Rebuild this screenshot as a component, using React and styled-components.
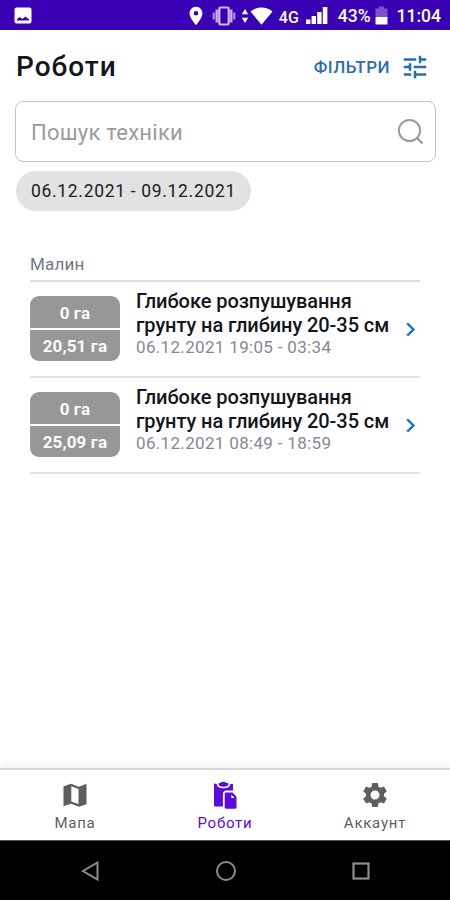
import React from 'react';
import styled, { createGlobalStyle } from 'styled-components';
import { MdLocationOn, MdTune, MdSettings } from 'react-icons/md';

const GlobalStyle = createGlobalStyle`
  * {
    box-sizing: border-box;
  }
  body {
    margin: 0;
    background: #fff;
    font-family: Roboto, 'Noto Sans', sans-serif;
  }
  button {
    border: 0;
    padding: 0;
    background: none;
    font-family: inherit;
  }
  svg {
    display: block;
    flex-shrink: 0;
  }
`;

const Screen = styled.div`
  width: 450px;
  height: 900px;
  display: flex;
  flex-direction: column;
  overflow: hidden;
  background: #fff;
`;

const StatusBar = styled.div`
  height: 30px;
  flex-shrink: 0;
  display: flex;
  align-items: center;
  justify-content: space-between;
  padding: 2px 9px 0 14px;
  color: #fff;
  background: #3a00b4;
  border-bottom: 1px solid #2c0a9c;
`;

const StatusIcons = styled.div`
  display: flex;
  align-items: center;
`;

const StatusText = styled.span`
  font-size: ${({ $size }) => $size || 18}px;
  font-weight: 500;
  line-height: 20px;
  letter-spacing: ${({ $spacing }) => $spacing || 0}px;
  margin-left: ${({ $gap }) => $gap || 0}px;
  padding-top: ${({ $drop }) => $drop || 0}px;
  white-space: nowrap;
`;

const Slot = styled.span`
  display: flex;
  margin-left: ${({ $gap }) => $gap || 0}px;
`;

const Header = styled.header`
  height: 71px;
  flex-shrink: 0;
  display: flex;
  align-items: center;
  justify-content: space-between;
  padding: 2px 20px 0 16px;
`;

const Title = styled.h1`
  margin: 0;
  font-size: 28px;
  font-weight: 500;
  line-height: 36px;
  letter-spacing: 1px;
  color: #14151c;
`;

const FilterButton = styled.button`
  display: flex;
  align-items: center;
  gap: 10px;
  font-size: 17px;
  font-weight: 500;
  line-height: 24px;
  letter-spacing: 0.5px;
  color: #2b6cb0;
`;

const SearchBox = styled.div`
  height: 61px;
  flex-shrink: 0;
  display: flex;
  align-items: center;
  justify-content: space-between;
  margin: 0 14px 0 15px;
  padding: 0 10px 0 15px;
  border: 1px solid #c4c4c4;
  border-radius: 8px;
`;

const Placeholder = styled.span`
  padding-top: 2px;
  font-size: 22px;
  line-height: 28px;
  letter-spacing: 0.25px;
  color: #9b9b9b;
`;

const Chip = styled.div`
  width: 235px;
  height: 40px;
  flex-shrink: 0;
  margin: 9px 0 0 16px;
  padding-left: 15px;
  border-radius: 20px;
  background: #e2e2e2;
  font-size: 17.5px;
  line-height: 40px;
  letter-spacing: 0.68px;
  white-space: nowrap;
  color: #202020;
`;

const Group = styled.section`
  flex: 1;
  padding: 41px 30px 0;
`;

const GroupName = styled.div`
  height: 30px;
  border-bottom: 2px solid #dedede;
  font-size: 17px;
  line-height: 24px;
  letter-spacing: 0.2px;
  color: #737784;
`;

const Row = styled.div`
  height: 96px;
  display: flex;
  padding-top: 14px;
  border-bottom: 2px solid #e3e3e3;
`;

const Area = styled.div`
  width: 90px;
  height: 65px;
  flex-shrink: 0;
  display: flex;
  flex-direction: column;
  gap: 2px;
  border-radius: 9px;
  overflow: hidden;
`;

const AreaValue = styled.div`
  flex: 1;
  display: flex;
  align-items: center;
  justify-content: center;
  padding-top: 2px;
  font-size: 17px;
  font-weight: 700;
  letter-spacing: 0.1px;
  color: #fafafa;
  background: #979797;
`;

const RowText = styled.div`
  flex: 1;
  margin: -7px 0 0 16px;
  white-space: nowrap;
`;

const WorkName = styled.div`
  font-size: 20px;
  font-weight: 500;
  line-height: 24px;
  letter-spacing: -0.07px;
  color: #14151c;
`;

const WorkTime = styled.div`
  font-size: 17px;
  line-height: 20px;
  letter-spacing: 0.33px;
  color: #858893;
`;

const Arrow = styled.div`
  align-self: flex-start;
  padding: 26px 4px 0 0;
`;

const Tabs = styled.nav`
  height: 72px;
  flex-shrink: 0;
  display: grid;
  grid-template-columns: repeat(3, 1fr);
  border-top: 2px solid #d6d6d6;
  background: #fff;
  box-shadow: 0 -4px 7px rgba(0, 0, 0, 0.05);
`;

const Tab = styled.div`
  display: flex;
  flex-direction: column;
  align-items: center;
  padding-top: 12px;
  font-size: 15px;
  line-height: 18px;
  letter-spacing: 0.75px;
  color: ${({ $active }) => ($active ? '#5b0be0' : '#5f5f5f')};
`;

const TabIcon = styled.span`
  height: 32px;
  display: flex;
  align-items: flex-start;
  margin-top: ${({ $lift }) => -($lift || 0)}px;
  margin-bottom: ${({ $lift }) => $lift || 0}px;
`;

const SystemBar = styled.div`
  height: 60px;
  flex-shrink: 0;
  display: flex;
  align-items: center;
  justify-content: space-between;
  padding: 0 80px 0 81px;
  border-top: 1px solid #555;
  background: #000;
`;

const PictureIcon = () => (
  <svg width="18" height="17" viewBox="0 0 18 17">
    <rect x="0.5" y="0.5" width="17" height="16" rx="2" fill="#fff" />
    <path d="M3 13.5v-1.500l3-2 2.300 2L11.500 9.500l3.500 3v1z" fill="#3a00b4" />
  </svg>
);

const VibrateIcon = () => (
  <svg width="24" height="20" viewBox="0 0 24 20" fill="none">
    <path d="M1.700 6.500v7M22.300 6.500v7" stroke="#a98be0" strokeWidth="2.200" />
    <path d="M4.700 3.500v13M19.300 3.500v13" stroke="#c3afea" strokeWidth="2.400" />
    <rect x="7.300" y="1.500" width="9.400" height="17" rx="1" stroke="#cdbcee" strokeWidth="2.200" />
  </svg>
);

const DataArrowsIcon = () => (
  <svg width="8" height="16" viewBox="0 0 8 16" fill="#fff">
    <path d="M4 1l3.200 5.300h-6.400zM4 15l3.200-5.300h-6.400z" />
  </svg>
);

const WifiIcon = () => (
  <svg width="23" height="18" viewBox="0 0 23 18" fill="#fff">
    <path d="M0.500 4.500C6.500-0.700 16.500-0.700 22.500 4.500L11.500 17.700z" />
  </svg>
);

const SignalIcon = () => (
  <svg width="22" height="17" viewBox="0 0 22 17" fill="#fff">
    <rect x="0" y="12.500" width="4.400" height="4.500" />
    <rect x="5.600" y="9" width="4.400" height="8" />
    <rect x="11.200" y="5" width="4.400" height="12" />
    <rect x="16.800" y="0" width="4.600" height="17" />
  </svg>
);

const BatteryIcon = () => (
  <svg width="13" height="19" viewBox="0 0 13 19">
    <path d="M4 0.500h5v2h3.500V11h-12V2.500H4z" fill="#7a52c8" />
    <rect x="0.500" y="11" width="12" height="7.500" rx="0.500" fill="#fff" />
  </svg>
);

const SearchIcon = () => (
  <svg width="28" height="28" viewBox="0 0 28 28" fill="none" stroke="#9b9b9b">
    <circle cx="12.500" cy="12.500" r="10.600" strokeWidth="2" />
    <path d="M19.500 19.500l6 6" strokeWidth="2.200" />
  </svg>
);

const ChevronIcon = () => (
  <svg width="11" height="15" viewBox="0 0 11 15" fill="none">
    <path d="M2.200 1.400L8.400 7.500l-6.200 6.100" stroke="#2470bd" strokeWidth="2.400" />
  </svg>
);

const MapIcon = () => (
  <svg width="24" height="28" viewBox="0 0 24 28">
    <path d="M0.500 4.300L8 1.800l8 3 7.500-3v20.400L16 24.700l-8-3-7.500 2.500z" fill="#5e5e5e" />
    <path d="M8.300 4.200l7.200 2.700v15.200l-7.200-2.600z" fill="#fff" />
  </svg>
);

const ClipboardIcon = () => (
  <svg width="24" height="28" viewBox="0 0 24 28">
    <path
      d="M1.500 2.600L3.600 3C4.600 6.500 7 7.300 10.500 7.300S16.400 6.500 17.400 3l2.600-0.300V9.500h-6.500c-2.200 0-3.600 1.400-3.600 3.600v12.300H2.500c-1 0-1.500-0.600-1.500-1.500V3z"
      fill="#5b0be0"
    />
    <path
      d="M5.500 3.300c0-1 1.500-1.500 2.800-1.700C8.800 0.500 12.200 0.500 12.700 1.600c1.300 0.200 2.800 0.700 2.800 1.700 0 1.500-1.800 2.400-5 2.400s-5-0.900-5-2.400z"
      fill="#5b0be0"
    />
    <path
      d="M13 11.500h6.500l4 4.300v10.700c0 0.700-0.400 1.200-1.200 1.200H13c-0.900 0-1.300-0.500-1.300-1.200V12.800c0-0.800 0.500-1.300 1.300-1.300z"
      fill="#5b0be0"
    />
    <path d="M18.300 13.600v3.300h3.300z" fill="#fff" />
  </svg>
);

const BackIcon = () => (
  <svg width="19" height="20" viewBox="0 0 19 20" fill="none">
    <path d="M16.500 1.500v17L2 10z" stroke="#8c8c8c" strokeWidth="2" />
  </svg>
);

const HomeIcon = () => (
  <svg width="22" height="22" viewBox="0 0 22 22" fill="none">
    <circle cx="11" cy="11" r="9" stroke="#8c8c8c" strokeWidth="2" />
  </svg>
);

const RecentIcon = () => (
  <svg width="18" height="18" viewBox="0 0 18 18" fill="none">
    <rect x="1.500" y="1.500" width="15" height="15" stroke="#8c8c8c" strokeWidth="2.200" />
  </svg>
);

const works = [
  { id: 1, done: '0 га', total: '20,51 га', time: '06.12.2021 19:05 - 03:34' },
  { id: 2, done: '0 га', total: '25,09 га', time: '06.12.2021 08:49 - 18:59' },
];

const WorkRow = ({ work }) => (
  <Row>
    <Area>
      <AreaValue>{work.done}</AreaValue>
      <AreaValue>{work.total}</AreaValue>
    </Area>
    <RowText>
      <WorkName>
        Глибоке розпушування
        <br />
        грунту на глибину 20-35 см
      </WorkName>
      <WorkTime>{work.time}</WorkTime>
    </RowText>
    <Arrow>
      <ChevronIcon />
    </Arrow>
  </Row>
);

const App = () => (
  <>
    <GlobalStyle />
    <Screen>
      <StatusBar>
        <PictureIcon />
        <StatusIcons>
          <MdLocationOn size={22} />
          <Slot $gap={5}>
            <VibrateIcon />
          </Slot>
          <Slot $gap={5}>
            <DataArrowsIcon />
          </Slot>
          <Slot $gap={1}>
            <WifiIcon />
          </Slot>
          <StatusText $size={16} $gap={6} $drop={4}>
            4G
          </StatusText>
          <Slot $gap={7}>
            <SignalIcon />
          </Slot>
          <StatusText $size={17.5} $gap={10}>
            43%
          </StatusText>
          <Slot $gap={4}>
            <BatteryIcon />
          </Slot>
          <StatusText $size={17.5} $gap={9}>
            11:04
          </StatusText>
        </StatusIcons>
      </StatusBar>
      <Header>
        <Title>Роботи</Title>
        <FilterButton type="button">
          ФІЛЬТРИ
          <MdTune size={30} />
        </FilterButton>
      </Header>
      <SearchBox>
        <Placeholder>Пошук техніки</Placeholder>
        <SearchIcon />
      </SearchBox>
      <Chip>06.12.2021 - 09.12.2021</Chip>
      <Group>
        <GroupName>Малин</GroupName>
        {works.map((work) => (
          <WorkRow key={work.id} work={work} />
        ))}
      </Group>
      <Tabs>
        <Tab>
          <TabIcon>
            <MapIcon />
          </TabIcon>
          Мапа
        </Tab>
        <Tab $active>
          <TabIcon $lift={1}>
            <ClipboardIcon />
          </TabIcon>
          Роботи
        </Tab>
        <Tab>
          <TabIcon $lift={2}>
            <MdSettings size={30} />
          </TabIcon>
          Аккаунт
        </Tab>
      </Tabs>
      <SystemBar>
        <BackIcon />
        <HomeIcon />
        <RecentIcon />
      </SystemBar>
    </Screen>
  </>
);

export default App;
